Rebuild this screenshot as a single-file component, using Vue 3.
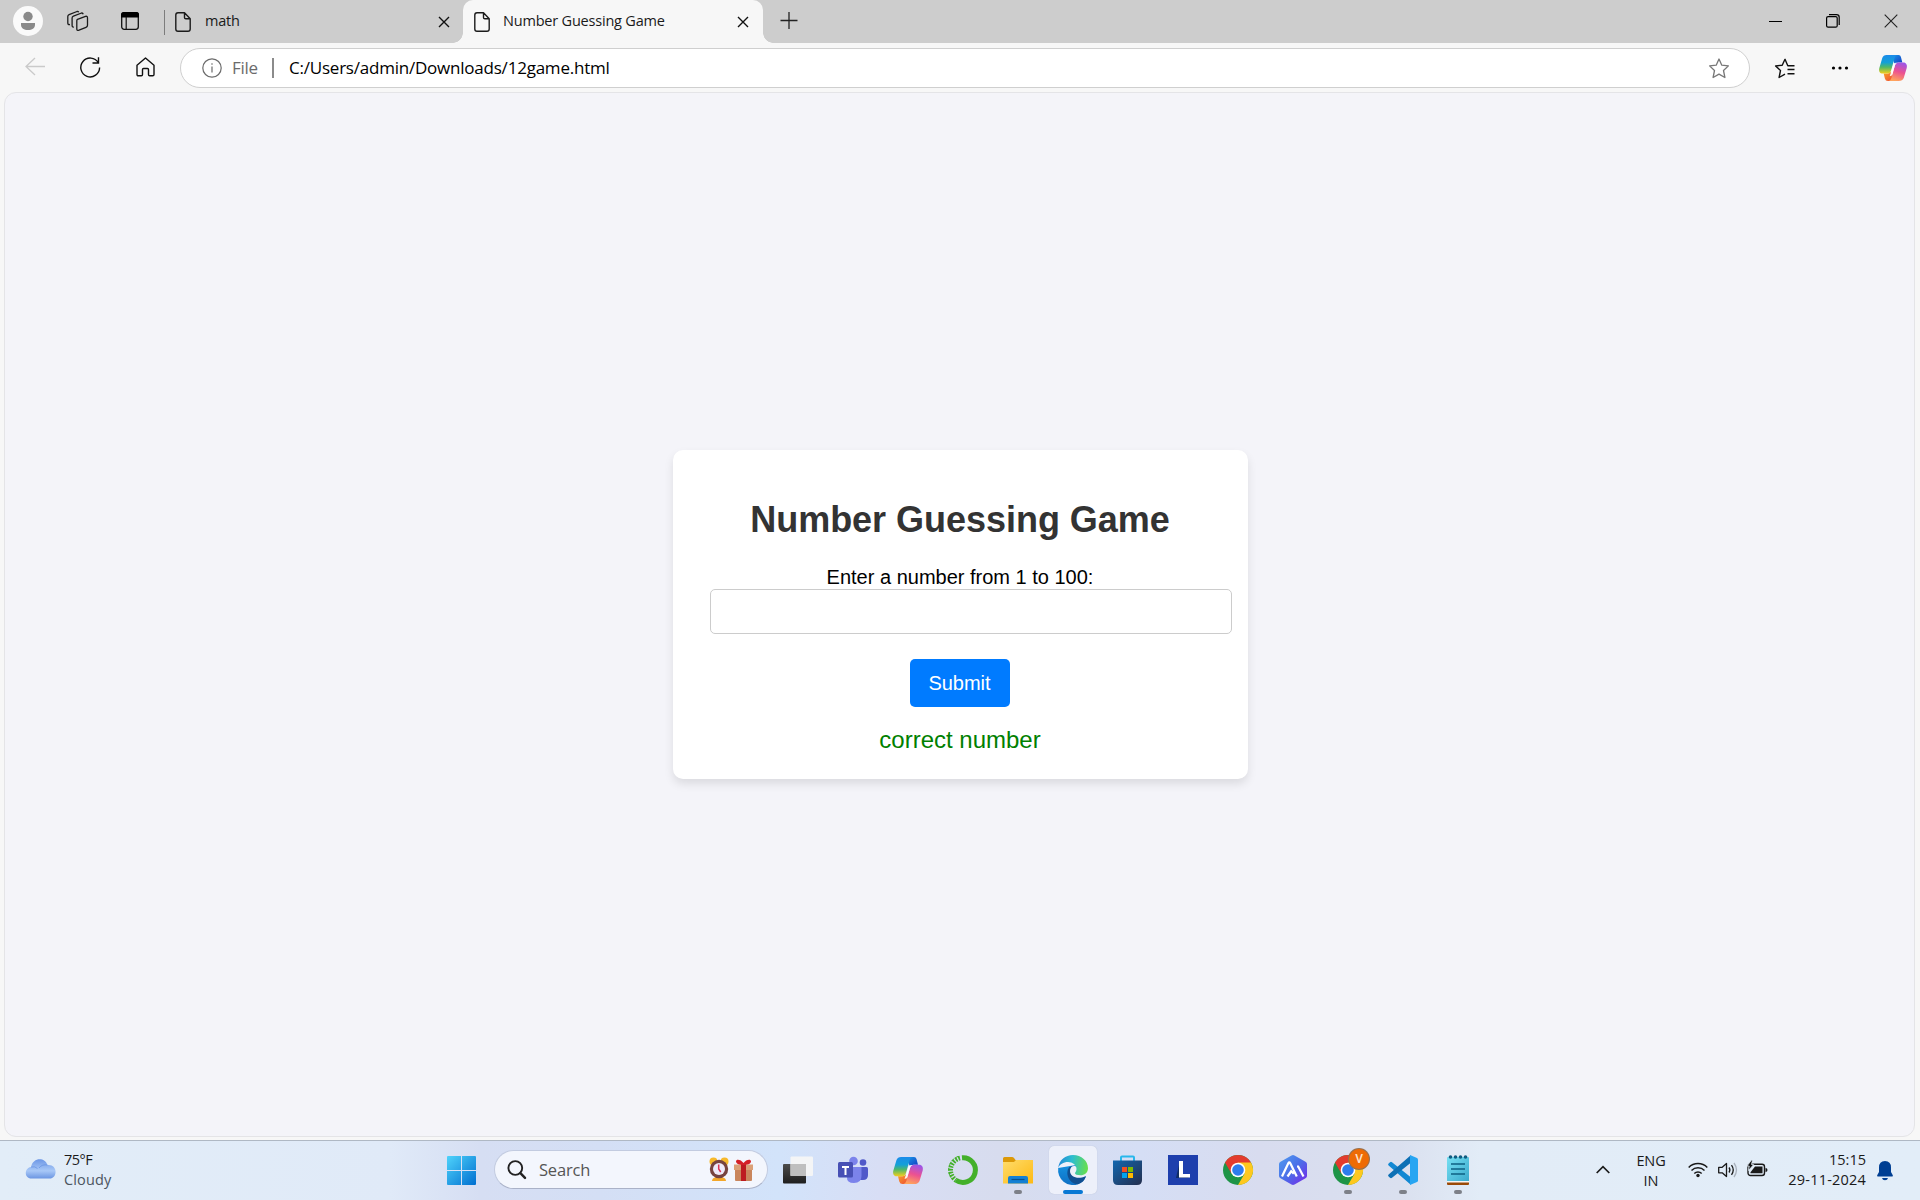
<script setup>
import { ref } from 'vue'

const guess = ref('')
const message = ref('correct number')
</script>

<template>
  <div class="desktop">
    <svg class="defs" width="0" height="0" aria-hidden="true">
      <defs>
        <linearGradient id="cpA" x1="0" y1="0" x2="0" y2="1"><stop offset="0" stop-color="#1b8bea" /><stop offset=".4" stop-color="#13a0d8" /><stop offset=".65" stop-color="#4fb868" /><stop offset="1" stop-color="#f5cf1b" /></linearGradient>
        <linearGradient id="cpB" x1=".7" y1="0" x2=".4" y2="1"><stop offset="0" stop-color="#9c55e8" /><stop offset=".5" stop-color="#ec5191" /><stop offset="1" stop-color="#ffa45c" /></linearGradient>
        <linearGradient id="cpC" x1="0" y1="0" x2="1" y2="1"><stop offset="0" stop-color="#1a9bea" /><stop offset="1" stop-color="#1437c0" /></linearGradient>
        <linearGradient id="cpD" x1="0" y1="0" x2="1" y2="1"><stop offset="0" stop-color="#f9a526" /><stop offset="1" stop-color="#ee4438" /></linearGradient>
        <linearGradient id="win" x1="0" y1="0" x2="1" y2="1"><stop offset="0" stop-color="#4fd3fb" /><stop offset="1" stop-color="#006fd0" /></linearGradient>
        <linearGradient id="cloud" x1="0" y1="0" x2="0" y2="1"><stop offset="0" stop-color="#6d97e6" /><stop offset=".6" stop-color="#a8c8f7" /><stop offset="1" stop-color="#6b95e2" /></linearGradient>
        <linearGradient id="fold" x1="0" y1="0" x2="1" y2="1"><stop offset="0" stop-color="#ffdc6b" /><stop offset="1" stop-color="#fdb913" /></linearGradient>
        <linearGradient id="edA" x1="0" y1=".3" x2="1" y2=".4"><stop offset="0" stop-color="#2388d8" /><stop offset=".45" stop-color="#2cbdd0" /><stop offset="1" stop-color="#67df4d" /></linearGradient>
        <linearGradient id="edB" x1="0" y1="0" x2="0" y2="1"><stop offset="0" stop-color="#1590df" /><stop offset="1" stop-color="#0f70c4" /></linearGradient>
        <linearGradient id="store" x1="0" y1="0" x2="1" y2="1"><stop offset="0" stop-color="#1267b0" /><stop offset="1" stop-color="#242e4d" /></linearGradient>
        <linearGradient id="hex" x1="0" y1="0" x2="1" y2="1"><stop offset="0" stop-color="#4f9df0" /><stop offset=".5" stop-color="#4b6ee8" /><stop offset="1" stop-color="#7825ea" /></linearGradient>
        <linearGradient id="note" x1="0" y1="0" x2="1" y2="1"><stop offset="0" stop-color="#76e0f3" /><stop offset="1" stop-color="#3ba9cc" /></linearGradient>
        <linearGradient id="tvA" x1="0" y1="0" x2="0" y2="1"><stop offset="0" stop-color="#4c4c4c" /><stop offset="1" stop-color="#1e1e1e" /></linearGradient>
        <g id="copilot">
          <path d="M18 0h3q2 0 2.500 2l1.500 5.500h-4.500q-2.500 0-3.500 2L13 0z" fill="url(#cpC)" />
          <path d="M12 26H9.500q-2.500 0-3.200-2.500L5 18.500h4.500q2.500 0 3.500-2L17 26z" fill="url(#cpD)" />
          <path d="M8 0h11q-1.500.6-2.300 3L12.800 16q-.9 2.600-3.500 2.600H4C.8 18.600-.5 16 .3 13.200L3.500 3Q4.600 0 8 0z" fill="url(#cpA)" />
          <path d="M21 26H10.500q2-.6 2.800-3L17.200 10q.9-2.500 3.500-2.500H26c3.200 0 4.500 2.600 3.700 5.400L26.500 23q-1.100 3-5.500 3z" fill="url(#cpB)" />
          <path d="M15.300 9.500q.6-1.800 2.700-1.800h1.500q-1.600.6-2.300 2.300L14 20q-.5 1.200-2.500 1l1.300-3.500z" fill="#fff" opacity=".9" />
        </g>
        <g id="chrome">
          <circle cx="15" cy="15" r="15" fill="#1e9447" />
          <path d="M15 15 2 7.500A15 15 0 0 1 28 7.500z" fill="#e33b2e" />
          <path d="M15 7.500H28A15 15 0 0 1 15 30L21.500 18.700z" fill="#fec81e" />
          <path d="M2 7.500 8.500 18.700 15 15 15 7.500z" fill="#e33b2e" />
          <circle cx="15" cy="15" r="7.300" fill="#fff" /><circle cx="15" cy="15" r="5.800" fill="#2e7cee" />
        </g>
      </defs>
    </svg>

    <header class="tabstrip">
      <svg class="avatar" width="30" height="30"><circle cx="15" cy="15" r="15" fill="#fafafa" /><circle cx="15" cy="10.500" r="4.700" fill="#8a8a8a" /><path d="M8 17h14v1.500c0 4-3 5.500-7 5.500s-7-1.500-7-5.500z" fill="#8a8a8a" /></svg>
      <svg class="spaces" width="22" height="22" fill="none" stroke="#1b1b1b" stroke-width="1.300" stroke-linejoin="round"><path d="M10.500 9.400 18.500 6.400q2-.6 2 1.500v7.400q0 1.500-1.500 2l-7 2.900q-2.200.8-2.200-1.300V10.800q0-1 .7-1.400zM6.800 17q-1.700.3-1.700-1.500V8q0-1.300 1.300-1.800l8.200-3.200q1.200-.2 1.600 1.200M3 14.500q-2.200.5-2.200-1.500V6.500q0-1.300 1.300-1.800L10 1.500q1.200-.3 1.700.8" /></svg>
      <svg class="tabmenu" width="18" height="18"><rect x=".7" y=".7" width="16.600" height="16.600" rx="2.500" fill="none" stroke="#111" stroke-width="1.300" /><path d="M0 5.500V2.500Q0 0 2.500 0h13Q18 0 18 2.500v3z" /><path d="M5.200 5v12" stroke="#111" stroke-width="1.200" /></svg>
      <i class="divider"></i>
      <div class="tab">
        <svg width="16" height="20" class="doc"><path d="M3 .8h6.500l5.700 6V17q0 2.200-2.200 2.200H3Q.8 19.200.8 17V3Q.8.8 3 .8zM9.500.8v4.700q0 1.300 1.300 1.300h4.400" /></svg>
        <span class="t-math">math</span>
        <svg class="x" width="12" height="12"><path d="m1 1 10 10M11 1 1 11" /></svg>
      </div>
      <div class="tab active">
        <svg width="16" height="20" class="doc"><path d="M3 .8h6.500l5.700 6V17q0 2.200-2.200 2.200H3Q.8 19.200.8 17V3Q.8.8 3 .8zM9.500.8v4.700q0 1.300 1.300 1.300h4.400" /></svg>
        <span class="t-game">Number Guessing Game</span>
        <svg class="x" width="12" height="12"><path d="m1 1 10 10M11 1 1 11" /></svg>
      </div>
      <svg class="plus" width="18" height="18" stroke="#222" stroke-width="1.300"><path d="M.5 8.500h17M9 0v17" /></svg>
      <div class="wincontrols">
        <svg width="13" height="14" stroke="#000"><path d="M0 7.500h13" /></svg>
        <svg width="14" height="14" fill="none" stroke="#000" stroke-width="1.200"><rect x=".6" y="2.600" width="10.600" height="10.600" rx="1.500" /><path d="M3 .6h7.500q2.700 0 2.700 2.700V11" /></svg>
        <svg width="14" height="14" stroke="#222" stroke-width="1.100"><path d="m.7.700 12.600 12.600M13.300.7.700 13.300" /></svg>
      </div>
    </header>

    <nav class="toolbar">
      <svg class="back" width="21" height="20" fill="none" stroke="#cacaca" stroke-width="1.300"><path d="M20 9.500H1M10 1 1 9.500l9 8.500" /></svg>
      <svg class="reload" width="21" height="22" fill="none" stroke="#111" stroke-width="1.400"><path d="M18.300 5.700A9.400 9.400 0 1 0 19.600 10.500M18.500.3v5.700h-6" /></svg>
      <svg class="home" width="19" height="20" fill="none" stroke="#111" stroke-width="1.400" stroke-linejoin="round"><path d="M1 8.200 9.500 1 18 8.200v9.300q0 1.300-1.300 1.300h-3q-1.200 0-1.200-1.300v-5q0-1-1-1h-4q-1 0-1 1v5q0 1.300-1.200 1.300h-3Q1 18.800 1 17.500z" /></svg>
      <div class="address">
        <svg class="info" width="20" height="20" fill="none" stroke="#6b6b6b" stroke-width="1.200"><circle cx="10" cy="10" r="9.200" /><path d="M10 8.500v6M10 5.200v1.600" /></svg>
        <span class="scheme">File</span>
        <i></i>
        <span class="url">C:/Users/admin/Downloads/12game.html</span>
        <svg class="star" width="22" height="21" fill="none" stroke="#777" stroke-width="1.300" stroke-linejoin="round"><path d="m11 1 2.800 6.200 6.600.7-4.900 4.600 1.400 7-5.900-3.400-5.900 3.400 1.400-7L1.600 7.900l6.600-.7z" /></svg>
      </div>
      <svg class="favs" width="22" height="21" fill="none" stroke="#111" stroke-width="1.400" stroke-linejoin="round"><path d="M20.500 7.800h-6.700L11 1.300 8.200 7.200l-6.600.7 4.900 4.600-1.400 7 5.900-3.400M13.500 11.500h7M13.500 15.700h7" /></svg>
      <svg class="dots" width="18" height="4"><circle cx="2.500" cy="2" r="1.600" /><circle cx="9" cy="2" r="1.600" /><circle cx="15.500" cy="2" r="1.600" /></svg>
      <svg class="cop" width="28" height="26" viewBox="0 0 30 26" preserveAspectRatio="none"><use href="#copilot" /></svg>
    </nav>

    <main class="page">
      <section class="card">
        <h1>Number Guessing Game</h1>
        <label for="guess">Enter a number from 1 to 100:</label>
        <input id="guess" v-model="guess" type="text" />
        <button type="button">Submit</button>
        <p>{{ message }}</p>
      </section>
    </main>

    <footer class="taskbar">
      <div class="weather">
        <svg width="31" height="20"><path d="M6.500 19.500C-1 19.500-1 9 6 8 8-2 20-2 22.500 6 33 5 33 19.500 24.500 19.500z" fill="url(#cloud)" /><path d="M6 8q4-1 6.500 1.500M14 9q3-4 8.500-3" fill="none" stroke="#5e8ae0" stroke-width="1" opacity=".6" /></svg>
        <div><b class="deg">75°F</b><span class="cloudy">Cloudy</span></div>
      </div>
      <svg class="start" width="29" height="29" fill="url(#win)"><path d="M1 0h13v14H0V1q0-1 1-1zM15 0h13q1 0 1 1v13H15zM0 15h14v14H1q-1 0-1-1zM15 15h14v13q0 1-1 1H15z" /></svg>
      <div class="search">
        <svg width="20" height="20" fill="none" stroke="#222" stroke-linecap="round"><circle cx="8.300" cy="8" r="6.900" stroke-width="1.900" /><path d="m13.400 13.200 4.600 4.600" stroke-width="2.500" /></svg>
        <span>Search</span>
        <svg class="gifts" width="45" height="25">
          <circle cx="4.500" cy="4.500" r="4" fill="#f7b92c" /><circle cx="15.500" cy="4.500" r="4" fill="#f7b92c" /><path d="M3 24q0-3 4-4h6q4 1 4 4z" fill="#f3a72a" />
          <circle cx="10" cy="12" r="9.200" fill="#77433f" /><circle cx="10" cy="12" r="6" fill="#eeeafa" /><path d="M9.700 7.500V12l2 3" fill="none" stroke="#dd3154" stroke-width="1.500" />
          <path d="M26 12h17v11q0 1-1 1H27q-1 0-1-1z" fill="#c9865d" /><path d="M25 7.500h19V13H25z" fill="#dba077" /><path d="M32 7h5v17h-5z" fill="#bd1c21" /><path d="M34.500 8C31 8 27 7 27 4.500c0-3 5-2 7.500 1.500C37 2.500 42 1.500 42 4.500 42 7 38 8 34.500 8z" fill="#d42128" />
        </svg>
      </div>
      <div class="apps">
        <div class="slot"><svg width="30" height="30"><rect y="9" width="23" height="19.500" rx="1" fill="url(#tvA)" /><rect x="7.500" y="1.500" width="22.500" height="19.500" rx="1" fill="#f5f5f5" opacity=".94" /><path d="M7.500 9H23v12H7.500z" fill="#bfbfbf" /></svg></div>
        <div class="slot"><svg width="30" height="30"><circle cx="25" cy="7.500" r="3.300" fill="#5059c9" /><path d="M20 12h8.500Q30 12 30 13.500V20q0 5-5 5h-5z" fill="#5059c9" /><circle cx="15.500" cy="6" r="4.300" fill="#7b83eb" /><path d="M9 12h14.500v9q0 7-7.500 7T9 22z" fill="#7b83eb" /><rect y="7" width="15" height="15.500" rx="1.500" fill="#4750b5" /><path d="M4 11h7v2H8.500v7h-2v-7H4z" fill="#fff" /></svg></div>
        <div class="slot"><svg width="30" height="27" viewBox="0 0 30 26" preserveAspectRatio="none"><use href="#copilot" /></svg></div>
        <div class="slot"><svg width="30" height="30" fill="none" stroke="#43b02a"><path d="M14 2.700A12.400 12.400 0 1 1 8 25.300" stroke-width="5" /><path d="M12 3A12.400 12.400 0 0 0 8 25.300" stroke-width="4.800" stroke-dasharray="1.800 1.200" /><path d="M10 1.500A14.200 14.200 0 0 0 5 25" stroke-width="1" stroke-dasharray="3 2" /></svg></div>
        <div class="slot"><svg width="30" height="27"><path d="M0 7V1.500Q0 0 1.500 0H9q1.200 0 2 1l1.500 2H30v4z" fill="#dc9908" /><path d="M0 5h11l2-2h17v23.500H0z" fill="url(#fold)" /><path d="M5 26.500V21q0-2 2-2h16q2 0 2 2v5.500z" fill="#1380d4" /><path d="M8.500 22.500h13" stroke="#07508d" stroke-width="1.200" /></svg><i class="run"></i></div>
        <div class="slot">
          <span class="focus"></span>
          <svg width="30" height="30">
            <path d="M.2 13A15 15 0 0 0 20 29.200Q26 27 27.800 21.600L18 10z" fill="url(#edB)" />
            <path d="M11.500 12C6.500 17.500 10.500 29 20 29.200 24 28 26.500 25.500 27.800 21.800L16 11z" fill="#114f91" />
            <path d="M12 16c0-4 3.200-6 6-4.500L31 14v4.500L27.300 21.300C19.500 25 12 21.500 12 16z" fill="#edf0fa" />
            <path d="M.2 13C1 5 7.500 0 15 0c8.500 0 15 6 15 13.200 0 4.500-3.500 7-7.500 7-3.500 0-5.500-1-5.500-2 0-1 1.500-1.700 1.500-4.200C18.500 10 14.500 7 10 7 5.500 7 1.500 9.500.2 13z" fill="url(#edA)" />
          </svg>
          <i class="run wide"></i>
        </div>
        <div class="slot"><svg width="30" height="30"><path d="M8 6V2.500Q8 1.500 9 1.500h11q1 0 1 1V6" fill="none" stroke="#28b7ec" stroke-width="2" /><path d="M0 5.500h29V25q0 5-5 5H5q-5 0-5-5z" fill="url(#store)" /><path d="M9 12h5v5H9z" fill="#f25022" /><path d="M15 12h5v5h-5z" fill="#7fba00" /><path d="M9 18h5v5H9z" fill="#00a4ef" /><path d="M15 18h5v5h-5z" fill="#ffb900" /></svg></div>
        <div class="slot"><svg width="30" height="30"><path d="M0 0h30v30H0z" fill="#1e3fad" /><path d="m11 10-3 13h12l2-2-9-2z" fill="#102c66" /><path d="M11 6h4v13h7v3.500H11z" fill="#fff" /></svg></div>
        <div class="slot"><svg width="30" height="30"><use href="#chrome" /></svg></div>
        <div class="slot"><svg width="28" height="30"><path d="M12.500.5q1.500-.8 3 0l11 6.200Q28 7.500 28 9v12q0 1.500-1.500 2.300l-11 6.200q-1.500.8-3 0l-11-6.200Q0 22.500 0 21V9q0-1.500 1.500-2.300z" fill="url(#hex)" /><path d="M3 21.500 9.300 8.300q1-1.800 2 0l6.500 13.200M8.500 21.500l3.700-5.200 2.600 2.500M18 11.500h1.200l5.300 10" fill="none" stroke="#fff" stroke-width="2.200" /></svg></div>
        <div class="slot"><svg width="30" height="30"><use href="#chrome" /></svg><b class="badge">V</b><i class="run"></i></div>
        <div class="slot"><svg width="30" height="30"><path d="M22.500 22v7.500L.6 10.500Q-.5 9.500.6 8.500L2 7.200q1-.8 2 0z" fill="#1288d3" /><path d="M22.500 8V.5L.6 19.500q-1.100 1 0 2L2 22.800q1 .8 2 0z" fill="#0d70b5" /><path d="m22 0 7 3q1 .5 1 1.500v21q0 1-1 1.500l-7 3z" fill="#27a5f2" /></svg><i class="run"></i></div>
        <div class="slot"><svg width="22" height="30"><path d="M0 26h22v3q0 1-1 1H1q-1 0-1-1z" fill="#9a4a08" /><path d="M0 23h22v4.500H0z" fill="#f5f5f5" /><path d="M0 3q0-1 1-1h20q1 0 1 1v23H0z" fill="url(#note)" /><path d="M4 9h14M4 14h14M4 19h14" stroke="#0e6083" stroke-width="1.700" /><g fill="#105c80"><circle cx="3.500" cy="2" r="1.800" /><circle cx="8.500" cy="2" r="1.800" /><circle cx="13.500" cy="2" r="1.800" /><circle cx="18.500" cy="2" r="1.800" /></g></svg><i class="run"></i></div>
      </div>
      <div class="tray">
        <svg class="caret" width="14" height="9" fill="none" stroke="#1a1a1a" stroke-width="1.700"><path d="m.7 8 6.300-6.300L13.300 8" /></svg>
        <div class="lang"><span>ENG</span><span>IN</span></div>
        <svg class="wifi" width="20" height="16" fill="none" stroke="#1a1a1a" stroke-width="1.500"><path d="M.7 5.500a13 13 0 0 1 18.600 0M3.500 8.500a9.200 9.200 0 0 1 13 0M6.300 11.500a5.300 5.300 0 0 1 7.400 0" /><circle cx="10" cy="13.500" r="1.700" fill="#1a1a1a" stroke="none" /></svg>
        <svg class="vol" width="20" height="16" fill="none" stroke="#1a1a1a" stroke-width="1.300"><path d="M.7 5.300h3.500L8.500 1.500v13L4.200 10.800H.7z" stroke-linejoin="round" /><path d="M11 5.500q1.800 2.500 0 5M13.500 3.200q3.500 4.800 0 9.600" /><path d="M16 1q5 7 0 14" stroke="#aab2bd" /></svg>
        <svg class="bat" width="21" height="17"><rect x="1" y="4.200" width="16.500" height="11.300" rx="2.500" fill="none" stroke="#1a1a1a" stroke-width="1.400" /><path d="M3.500 13.300v-1L8 6.500h7.500v6.800z" fill="#1a1a1a" /><path d="M18.500 8q2 0 2 2t-2 2z" fill="#1a1a1a" /><path d="m4.500 0-4.500 6h2.200L1.500 10.500l5.200-6H4.500L5.500 0z" fill="#111" stroke="#e2edf8" stroke-width=".8" /></svg>
        <div class="clock"><span>15:15</span><span class="date">29-11-2024</span></div>
        <svg class="bell" width="16" height="20" fill="#003f93"><path d="M8 0q6 0 6 6.500v4.500l1.800 3.300q.5 1.200-.8 1.200H1q-1.300 0-.8-1.200L2 11V6.500Q2 0 8 0zM5 17h6q-.5 2.200-3 2.200T5 17z" /></svg>
      </div>
    </footer>
  </div>
</template>

<style>
body { margin: 0; overflow: hidden; }
</style>

<style scoped>
* { box-sizing: border-box; }
svg { display: block; flex: none; overflow: visible; }
.defs { position: absolute; }
.desktop { width: 1920px; height: 1200px; display: flex; flex-direction: column; background: #f7f7f7; font-family: "Open Sans", "Noto Sans", sans-serif; color: #1a1a1a; overflow: hidden; }
span, b { white-space: nowrap; }

.tabstrip { flex: none; height: 43px; background: #cdcdcd; display: flex; align-items: flex-start; }
.avatar { margin: 6px 0 0 13px; }
.spaces { margin: 10px 0 0 24px; }
.tabmenu { margin: 12px 0 0 32px; }
.divider { width: 1px; height: 25px; margin: 10px 0 0 25px; background: #7c7c7c; }
.tab { display: flex; align-items: center; width: 298px; height: 43px; padding: 0 13px 1px 10px; }
.doc { fill: none; stroke: #1b1b1b; stroke-width: 1.4; stroke-linejoin: round; margin-top: 2px; }
.tab span { margin-left: 14px; padding-bottom: 2px; font-size: 14.500px; color: #1a1a1a; }
.tab .x { margin-left: auto; margin-top: 2px; stroke: #111; stroke-width: 1.4; }
.tab.active { position: relative; width: 300px; background: #f7f7f7; border-radius: 10px 10px 0 0; padding-right: 14px; padding-left: 11px; }
.tab.active::before, .tab.active::after { content: ""; position: absolute; bottom: 0; width: 10px; height: 10px; }
.tab.active::before { left: -10px; background: radial-gradient(circle at 0 0, #cdcdcd 9.500px, #f7f7f7 10px); }
.tab.active::after { right: -10px; background: radial-gradient(circle at 100% 0, #cdcdcd 9.500px, #f7f7f7 10px); }
.t-math { letter-spacing: -.2px; }
.tab .t-game { letter-spacing: -.2px; margin-left: 13px; }
.plus { margin: 12px 0 0 17px; }
.wincontrols { margin: 14px 22px 0 auto; display: flex; gap: 44px; }

.toolbar { flex: none; height: 49px; display: flex; align-items: flex-start; }
.back { margin: 14px 0 0 25px; }
.reload { margin: 14px 0 0 34px; }
.home { margin: 14px 0 0 35px; }
.address { display: flex; align-items: center; width: 1570px; height: 40px; margin: 5px 0 0 25px; padding: 0 19px 0 21px; border: 1px solid #cfcfcf; border-radius: 20px; background: #fff; }
.scheme { margin-left: 10px; width: 40px; padding-bottom: 2px; font-size: 17px; color: #6b6b6b; letter-spacing: -.3px; }
.address i { width: 2px; height: 20px; background: #8b8b8b; }
.url { margin-left: 15px; padding-bottom: 2px; font-size: 17px; letter-spacing: -.22px; color: #000; }
.star { margin-left: auto; }
.favs { margin: 15px 0 0 24px; }
.dots { margin: 23px 0 0 35px; }
.cop { margin: 12px 0 0 30px; }

.page { flex: none; width: 1911px; height: 1045px; margin-left: 4px; background: #f4f4f9; border: 1px solid #e4e4e7; border-radius: 12px; display: flex; align-items: center; justify-content: center; font-family: "Liberation Sans", Arial, sans-serif; }
.card { width: 575px; height: 329px; margin-left: 1px; display: flex; flex-direction: column; align-items: center; background: #fff; border-radius: 10px; box-shadow: 0 5px 10px rgba(0, 0, 0, .1); color: #000; }
h1 { margin: 49px 0 0; height: 42px; line-height: 42px; font-size: 36px; letter-spacing: -.03px; color: #333; white-space: nowrap; }
label { margin-top: 25px; height: 23px; line-height: 23px; font-size: 20px; }
input { align-self: flex-start; margin-left: 37px; width: 522px; height: 45px; border: 1px solid #ccc; border-radius: 5px; font: 20px "Liberation Sans", sans-serif; padding: 10px; background: #fff; }
button { width: 100px; height: 48px; margin-top: 25px; margin-right: 1px; padding: 0; border: 0; border-radius: 5px; background: #007bff; color: #fff; font: 20px "Liberation Sans", sans-serif; }
.card p { margin: 19px 0 0; line-height: 27px; font-size: 24px; color: green; }

.taskbar { flex: none; height: 60px; margin-top: 3px; border-top: 1px solid #afb8c4; display: flex; align-items: flex-start; background: linear-gradient(90deg, #e2edf8 0, #e0eaf8 390px, #d6def3 480px, #d4dff5 600px, #d2e3fa 780px, #d8def5 880px, #d7dcee 1000px, #d5def5 1140px, #d8dcef 1260px, #dae0ef 1400px, #e2ecf7 1480px, #e2edf8 100%); }
.weather { display: flex; width: 422px; padding-left: 25px; margin-right: 25px; }
.weather svg { margin-top: 18px; }
.weather div { margin: 9px 0 0 8px; display: flex; flex-direction: column; font-size: 14.500px; line-height: 20px; }
.deg { font-weight: 400; letter-spacing: -.5px; }
.cloudy { color: #4c5561; letter-spacing: .15px; }
.start { margin-top: 15px; }
.search { width: 274px; height: 39px; margin: 9px 0 0 18px; display: flex; align-items: center; padding: 0 13px 0 12px; background: #f3f6fd; border: 1px solid #c2cbe0; border-bottom-color: #aab2c8; border-radius: 20px; }
.search span { margin-left: 12px; font-size: 16.500px; letter-spacing: -.2px; color: #555; }
.gifts { margin-left: auto; }
.apps { display: flex; margin-left: 2px; }
.slot { position: relative; width: 55px; height: 58px; display: flex; align-items: center; justify-content: center; }
.slot svg { position: relative; }
.focus { position: absolute; left: 4px; top: 5px; width: 48px; height: 48px; border-radius: 5px; background: #edf0fa; box-shadow: 0 0 1px #aeb7cc; }
.run { position: absolute; left: 24px; top: 49px; width: 8px; height: 4px; border-radius: 2px; background: #7d8088; }
.run.wide { left: 18px; width: 20px; background: #0878d4; }
.badge { position: absolute; left: 29px; top: 8px; width: 20px; height: 20px; border-radius: 50%; background: #ee6b05; box-shadow: 0 0 0 1px #98704e; color: #ffe2cb; font: 500 12px/20px Roboto, sans-serif; text-align: center; }
.tray { display: flex; margin-left: auto; margin-right: 27px; }
.caret { margin-top: 24px; }
.lang, .clock { display: flex; flex-direction: column; font-size: 14.500px; line-height: 20px; margin-top: 9px; }
.lang { width: 60px; align-items: center; margin-left: 11px; margin-right: 7px; letter-spacing: -.1px; margin-top: 10px; }
.wifi, .vol { margin-top: 21px; }
.vol { margin-left: 10px; }
.bat { margin: 19px 0 0 9px; }
.clock { width: 80px; margin-left: 18px; margin-right: 11px; align-items: flex-end; }
.date { letter-spacing: .2px; }
.bell { margin-top: 20px; }
</style>
